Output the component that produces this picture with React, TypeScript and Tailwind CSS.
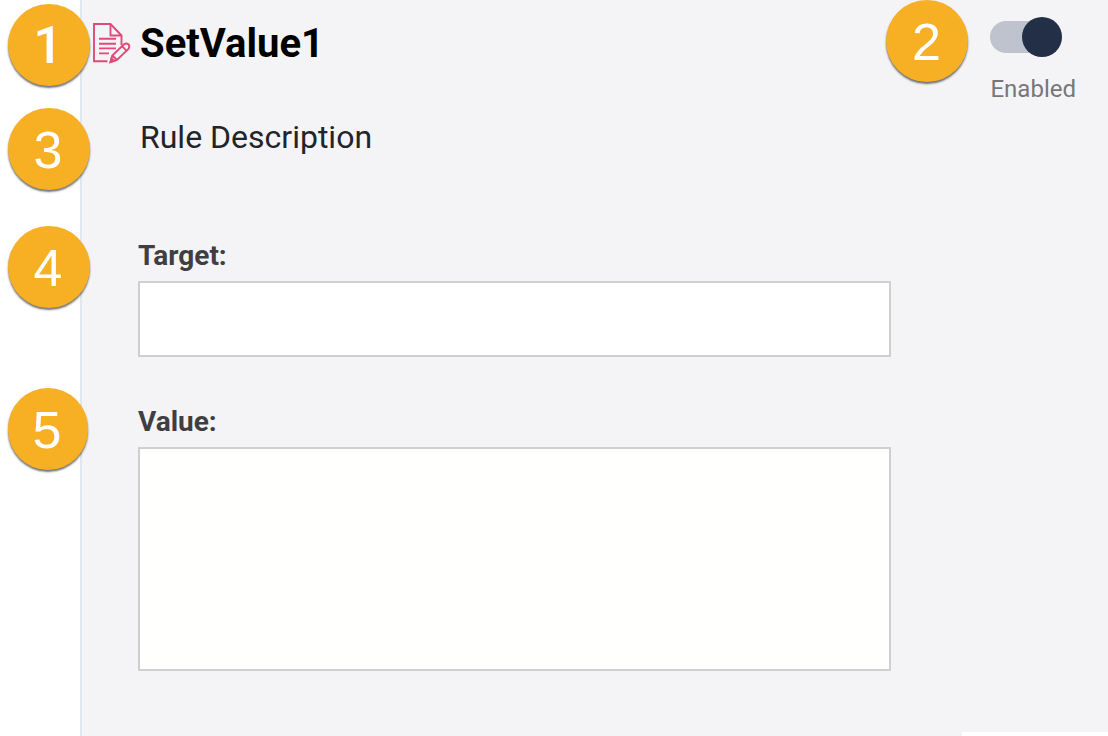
import { useState } from "react";
import clsx from "clsx";

type MarkerProps = {
  label: string;
  className?: string;
};

const Marker = ({ label, className }: MarkerProps) => (
  <span
    className={clsx(
      "absolute flex h-[82px] items-center justify-center rounded-full bg-[#f7b024] pt-0.5 pr-0.5 text-[52px] leading-none text-white shadow-[0_2px_2px_rgba(0,0,0,0.55)]",
      className
    )}
  >
    {label}
  </span>
);

const RuleIcon = () => (
  <svg
    viewBox="0 1 38 40"
    className="h-10 w-[38px] shrink-0 overflow-visible"
    fill="none"
    stroke="#df4a78"
    strokeWidth="1.9"
    aria-hidden="true"
  >
    <path d="M14.5 38.2H1V1h16.5L28.5 12.5V22" />
    <path d="M17.5 1v11.5h11" />
    <path d="M6 15.8h17M6 20.8h17M6 25.4h17M6 30.4h10" />
    <path d="M17.5 39l1.8-6.5L31 21.3q2.5-1.6 4.3 0t.4 4.3L24 37z" />
    <path d="M19.3 32.5L24 37M29 23.2l4.6 4.6" />
    <path d="M17.5 39l1-3.6 2.6 2.4z" fill="#df4a78" />
  </svg>
);

const RuleEditor = () => {
  const [enabled, setEnabled] = useState(true);
  const [target, setTarget] = useState("");
  const [value, setValue] = useState("");

  return (
    <div className="flex min-h-screen bg-white font-[Roboto,sans-serif]">
      <aside className="w-20 shrink-0" />

      <main className="flex flex-1 flex-col border-l-2 border-[#e2e6ee] bg-[#f4f4f7] pt-1">
        {/* Header */}
        <header className="relative flex h-[104px] items-start justify-between pr-8 pl-[11px]">
          <Marker
            label="1"
            className="-left-[74px] top-0 w-[82px] font-[Roboto,sans-serif] font-medium"
          />
          <div className="flex items-center gap-[9px] pt-4">
            <RuleIcon />
            <h1 className="text-[40px] leading-12 font-bold text-black">
              SetValue1
            </h1>
          </div>

          <label className="relative flex flex-col gap-4 pt-[13px]">
            <Marker
              label="2"
              className="-top-1 -left-[104px] w-[82px] font-[Liberation_Sans,Arial,sans-serif]"
            />
            <input
              type="checkbox"
              role="switch"
              checked={enabled}
              onChange={(e) => setEnabled(e.target.checked)}
              className="relative my-1 h-8 w-[68px] appearance-none rounded-full bg-[#bfc3cd] before:absolute before:-top-1 before:left-0 before:size-10 before:rounded-full before:bg-white checked:before:left-8 checked:before:bg-[#232e47]"
            />
            <span className="text-2xl leading-8 text-[#77777a]">Enabled</span>
          </label>
        </header>

        {/* Description */}
        <section className="relative h-[118px] pt-[9px] pl-[58px]">
          <Marker
            label="3"
            className="-left-[74px] top-0 w-[82px] font-[Liberation_Sans,Arial,sans-serif]"
          />
          <p className="text-[32px] leading-10 text-[#212529]">
            Rule Description
          </p>
        </section>

        {/* Fields */}
        <div className="relative mr-[217px] flex flex-col pt-3 pl-14">
          <Marker
            label="4"
            className="-left-[74px] top-0 w-[82px] font-[Liberation_Sans,Arial,sans-serif]"
          />
          <label
            htmlFor="target"
            className="mb-[7px] text-[28px] leading-9 font-bold text-[#3f3f42]"
          >
            Target:
          </label>
          <input
            id="target"
            type="text"
            value={target}
            onChange={(e) => setTarget(e.target.value)}
            className="h-[76px] border-2 border-[#cfcfd1] bg-white px-4 text-2xl outline-none"
          />
        </div>

        <div className="relative mt-[31px] mr-[217px] flex flex-col pt-4 pl-14">
          <Marker
            label="5"
            className="-left-[74px] top-0 w-20 font-[Liberation_Sans,Arial,sans-serif]"
          />
          <label
            htmlFor="value"
            className="mb-[7px] text-[28px] leading-9 font-bold text-[#3f3f42]"
          >
            Value:
          </label>
          <textarea
            id="value"
            value={value}
            onChange={(e) => setValue(e.target.value)}
            className="h-56 resize-none border-2 border-[#cfcfd1] bg-[#fffffd] p-4 text-2xl outline-none"
          />
        </div>

        <div className="mt-auto h-1 w-[146px] self-end bg-white" />
      </main>
    </div>
  );
};

export default RuleEditor;
